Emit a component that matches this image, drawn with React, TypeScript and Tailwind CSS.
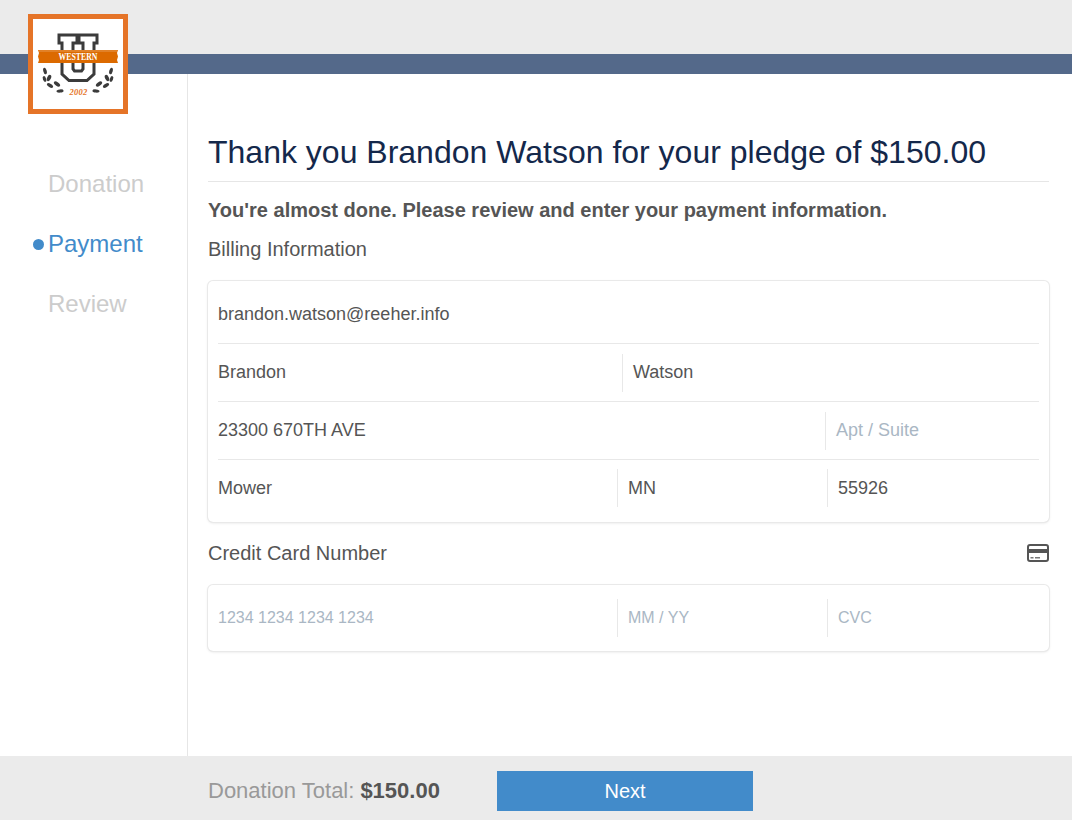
import React from "react";

const Logo = () => (
  <div className="absolute left-[28px] top-[14px] w-[100px] h-[100px] bg-white border-[5px] border-[#e57428]">
    <svg width="90" height="90" viewBox="0 0 90 90">
      {/* the U */}
      <path d="M26 16H44V24H40V50L41.5 52H48.5L50 50V24H46V16H64V24H61V55L54 61.5H36L29 55V24H26Z" fill="#fff" stroke="#3b3b3b" strokeWidth="3" />
      {/* banner */}
      <path d="M5 31H85L84 34L85 37.5L84 41L85 44H5L6 41L5 37.5L6 34Z" fill="#dc6a00" />
      <path d="M6 32H84" stroke="#f3c9a0" strokeWidth="0.5" />
      <text x="45" y="41" textAnchor="middle" fontSize="10" fontWeight="700" fill="#fff" fontFamily="Liberation Serif, serif" textLength="39" lengthAdjust="spacingAndGlyphs">WESTERN</text>
      {/* laurels */}
      <g fill="#3b3b3b">
        <ellipse cx="12" cy="52" rx="1.7" ry="3.4" transform="rotate(-15 12 52)" />
        <ellipse cx="16" cy="59" rx="1.9" ry="3.4" transform="rotate(25 16 59)" />
        <ellipse cx="11.5" cy="60" rx="1.6" ry="3" transform="rotate(-20 11.5 60)" />
        <ellipse cx="24" cy="65" rx="1.8" ry="3.6" transform="rotate(-55 24 65)" />
        <ellipse cx="17" cy="66.5" rx="1.7" ry="3.4" transform="rotate(-60 17 66.5)" />
        <ellipse cx="27" cy="72" rx="1.6" ry="3.6" transform="rotate(85 27 72)" />
        <ellipse cx="78" cy="52" rx="1.7" ry="3.4" transform="rotate(15 78 52)" />
        <ellipse cx="74" cy="59" rx="1.9" ry="3.4" transform="rotate(-25 74 59)" />
        <ellipse cx="78.5" cy="60" rx="1.6" ry="3" transform="rotate(20 78.5 60)" />
        <ellipse cx="66" cy="65" rx="1.8" ry="3.6" transform="rotate(55 66 65)" />
        <ellipse cx="73" cy="66.5" rx="1.7" ry="3.4" transform="rotate(60 73 66.5)" />
        <ellipse cx="63" cy="72" rx="1.6" ry="3.6" transform="rotate(-85 63 72)" />
      </g>
      <text x="45.5" y="75.5" textAnchor="middle" fontSize="8.5" fontWeight="700" fill="#e57428" fontFamily="Liberation Serif, serif" fontStyle="italic" letterSpacing="0.3">2002</text>
    </svg>
  </div>
);

const CardIcon = () => (
  <svg width="22" height="18" viewBox="0 0 22 18">
    <rect x="1" y="1" width="20" height="16" rx="2" fill="#fff" stroke="#555" strokeWidth="2" />
    <rect x="1" y="5" width="20" height="4" fill="#555" />
    <rect x="3.5" y="13" width="3" height="1.5" fill="#777" />
    <rect x="8" y="13" width="5" height="1.5" fill="#777" />
  </svg>
);

const Field = ({ value, placeholder, className }: { value?: string; placeholder?: string; className?: string }) => (
  <div className={"flex items-center h-[38px] " + (className ?? "")}>
    <span className={value ? "text-[#555555]" : "text-[#aab7c4]"}>{value ?? placeholder}</span>
  </div>
);

const Row = ({ children, last }: { children: React.ReactNode; last?: boolean }) => (
  <div className={"flex items-center " + (last ? "h-[56px]" : "h-[58px] border-b border-[#e8e8e8]")}>{children}</div>
);

export default function App() {
  return (
    <div className="relative flex flex-col h-[820px] bg-white font-['Liberation_Sans',Arial,sans-serif]">
      <div className="h-[54px] bg-[#ebebeb]" />
      <div className="h-[20px] bg-[#54698a]" />
      <Logo />

      <div className="flex flex-1">
        {/* step list */}
        <div className="w-[188px] border-r border-[#e6e6e6] pt-[80px] text-[24px]">
          <div className="flex items-center h-[60px] pl-[48px] text-[#cccccc]">Donation</div>
          <div className="relative flex items-center h-[60px] pl-[48px] text-[#428bca]">
            <span className="absolute left-[33px] top-[25px] w-[11px] h-[11px] rounded-full bg-[#428bca]" />
            Payment
          </div>
          <div className="flex items-center h-[60px] pl-[48px] text-[#cccccc]">Review</div>
        </div>

        {/* form */}
        <div className="flex-1 pl-[20px] pr-[23px] pt-[56px]">
          <h1 className="h-[52px] border-b border-[#e6e6e6] text-[32px] leading-[44px] text-[#14284b]">
            Thank you Brandon Watson for your pledge of $150.00
          </h1>
          <p className="mt-[15px] text-[20px] leading-[26px] font-bold text-[#555555]">
            You're almost done. Please review and enter your payment information.
          </p>
          <p className="mt-[13px] text-[20px] leading-[26px] text-[#555555]">Billing Information</p>

          <div className="mt-[19px] h-[241px] px-[10px] pt-[5px] rounded-[5px] shadow-[0_0_0_1px_#e9e9e9,0_1px_3px_rgba(0,0,0,0.12)] text-[18px]">
            <Row>
              <Field value="brandon.watson@reeher.info" className="flex-1" />
            </Row>
            <Row>
              <Field value="Brandon" className="w-[404px]" />
              <Field value="Watson" className="flex-1 pl-[10px] border-l border-[#e8e8e8]" />
            </Row>
            <Row>
              <Field value="23300 670TH AVE" className="w-[607px]" />
              <Field placeholder="Apt / Suite" className="flex-1 pl-[10px] border-l border-[#e8e8e8]" />
            </Row>
            <Row last>
              <Field value="Mower" className="w-[399px]" />
              <Field value="MN" className="w-[210px] pl-[10px] border-l border-[#e8e8e8]" />
              <Field value="55926" className="flex-1 pl-[10px] border-l border-[#e8e8e8]" />
            </Row>
          </div>

          <div className="flex items-center justify-between mt-[18px] h-[26px]">
            <span className="text-[20px] text-[#555555]">Credit Card Number</span>
            <CardIcon />
          </div>

          <div className="mt-[19px] h-[66px] px-[10px] flex items-center rounded-[5px] shadow-[0_0_0_1px_#e9e9e9,0_1px_3px_rgba(0,0,0,0.12)] text-[16px]">
            <Field placeholder="1234 1234 1234 1234" className="w-[399px]" />
            <Field placeholder="MM / YY" className="w-[210px] pl-[10px] border-l border-[#e8e8e8]" />
            <Field placeholder="CVC" className="flex-1 pl-[10px] border-l border-[#e8e8e8]" />
          </div>
        </div>
      </div>

      {/* footer */}
      <div className="flex items-start h-[64px] bg-[#ebebeb] pl-[208px] pt-[15px]">
        <div className="w-[289px] h-[38px] flex items-center gap-[6px] text-[22px] text-[#999999]">
          <span>Donation Total:</span>
          <span className="font-bold text-[#555555]">$150.00</span>
        </div>
        <button className="w-[256px] h-[40px] bg-[#428bca] text-white text-[20px]">Next</button>
      </div>
    </div>
  );
}
